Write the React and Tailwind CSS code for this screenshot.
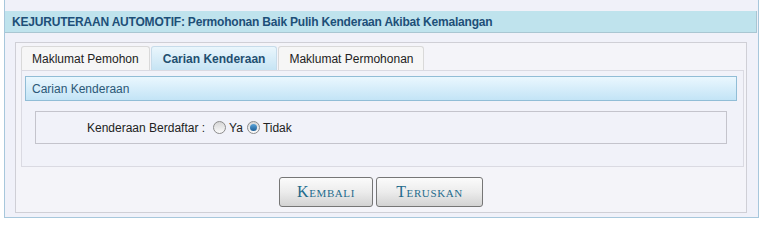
import React from "react";

function Radio({ checked }) {
  return (
    <span className="relative inline-flex h-[13px] w-[13px] items-center justify-center rounded-full border border-[#8c8c8c] bg-gradient-to-b from-[#d6d6d6] to-[#fbfbfb]">
      {checked && (
        <span className="h-[7px] w-[7px] rounded-full bg-gradient-to-b from-[#5aa4d8] to-[#1d5f98]" />
      )}
    </span>
  );
}

function Tab({ label, active }) {
  if (active) {
    return (
      <div className="flex h-[24px] items-center rounded-t-[3px] border border-b-0 border-[#c7dcea] bg-gradient-to-b from-[#eaf6fc] to-[#c6e4f4] px-[11px] font-bold text-[#1f4f70]">
        {label}
      </div>
    );
  }
  return (
    <div className="flex h-[24px] items-center rounded-t-[3px] border border-b-0 border-[#d9d9d9] bg-[#f6f6f6] px-[10px] text-[#222]">
      {label}
    </div>
  );
}

export default function App() {
  const buttons = [
    { label: "Kembali", w: "w-[94px]" },
    { label: "Teruskan", w: "w-[107px]" },
  ];

  return (
    <div
      className="h-[227px] w-[764px] bg-white text-[12px]"
      style={{ fontFamily: '"Liberation Sans", Arial, sans-serif' }}
    >
      <div className="ml-[4px] h-[218px] w-[755px] border-x border-b border-[#a7c7dc] bg-[#f0f1f9] pt-[11px]">
        <div className="flex h-[22px] w-[752px] items-center border-r border-b border-[#a9c6d2] bg-[#bfe3ed] pl-[7px] font-bold tracking-[-0.2px] text-[#1d4f78]">
          KEJURUTERAAN AUTOMOTIF: Permohonan Baik Pulih Kenderaan Akibat Kemalangan
        </div>

        <div className="ml-[10px] mt-[9px] h-[171px] w-[732px] border border-[#cfcfd6] bg-[#f4f4f9] pl-[5px] pt-[3px]">
          <div className="flex h-[24px] items-end gap-[1px]">
            <Tab label="Maklumat Pemohon" />
            <Tab label="Carian Kenderaan" active />
            <Tab label="Maklumat Permohonan" />
          </div>

          <div className="h-[97px] w-[723px] border border-[#dadae2] bg-[#f1f2f9] px-[3px] pt-[5px]">
            <div className="flex h-[25px] w-[712px] items-center border border-[#91bdd6] bg-gradient-to-b from-[#eaf7fe] to-[#c3e4f6] pl-[6px] text-[#2b5877]">
              Carian Kenderaan
            </div>

            <div className="ml-[10px] mt-[10px] flex h-[33px] w-[692px] items-center border border-[#c4c4cc] bg-[#f1f2f9] pl-[51px] text-[#222]">
              <span>Kenderaan Berdaftar :</span>
              <span className="ml-[8px] flex items-center gap-[3px]">
                <Radio />
                <span>Ya</span>
              </span>
              <span className="ml-[4px] flex items-center gap-[3px]">
                <Radio checked />
                <span>Tidak</span>
              </span>
            </div>
          </div>

          <div className="mt-[10px] flex justify-center gap-[3px] pr-[5px]">
            {buttons.map((b) => (
              <button
                key={b.label}
                className={`flex h-[30px] ${b.w} items-center justify-center rounded-[3px] border border-[#767676] bg-gradient-to-b from-[#fbfbfb] via-[#ececec] to-[#d3d3d3] text-[16px] tracking-[0.6px] text-[#1f6b8c]`}
                style={{ fontFamily: '"Liberation Serif", "Times New Roman", serif', fontVariant: "small-caps" }}
              >
                {b.label}
              </button>
            ))}
          </div>
        </div>
      </div>
    </div>
  );
}
